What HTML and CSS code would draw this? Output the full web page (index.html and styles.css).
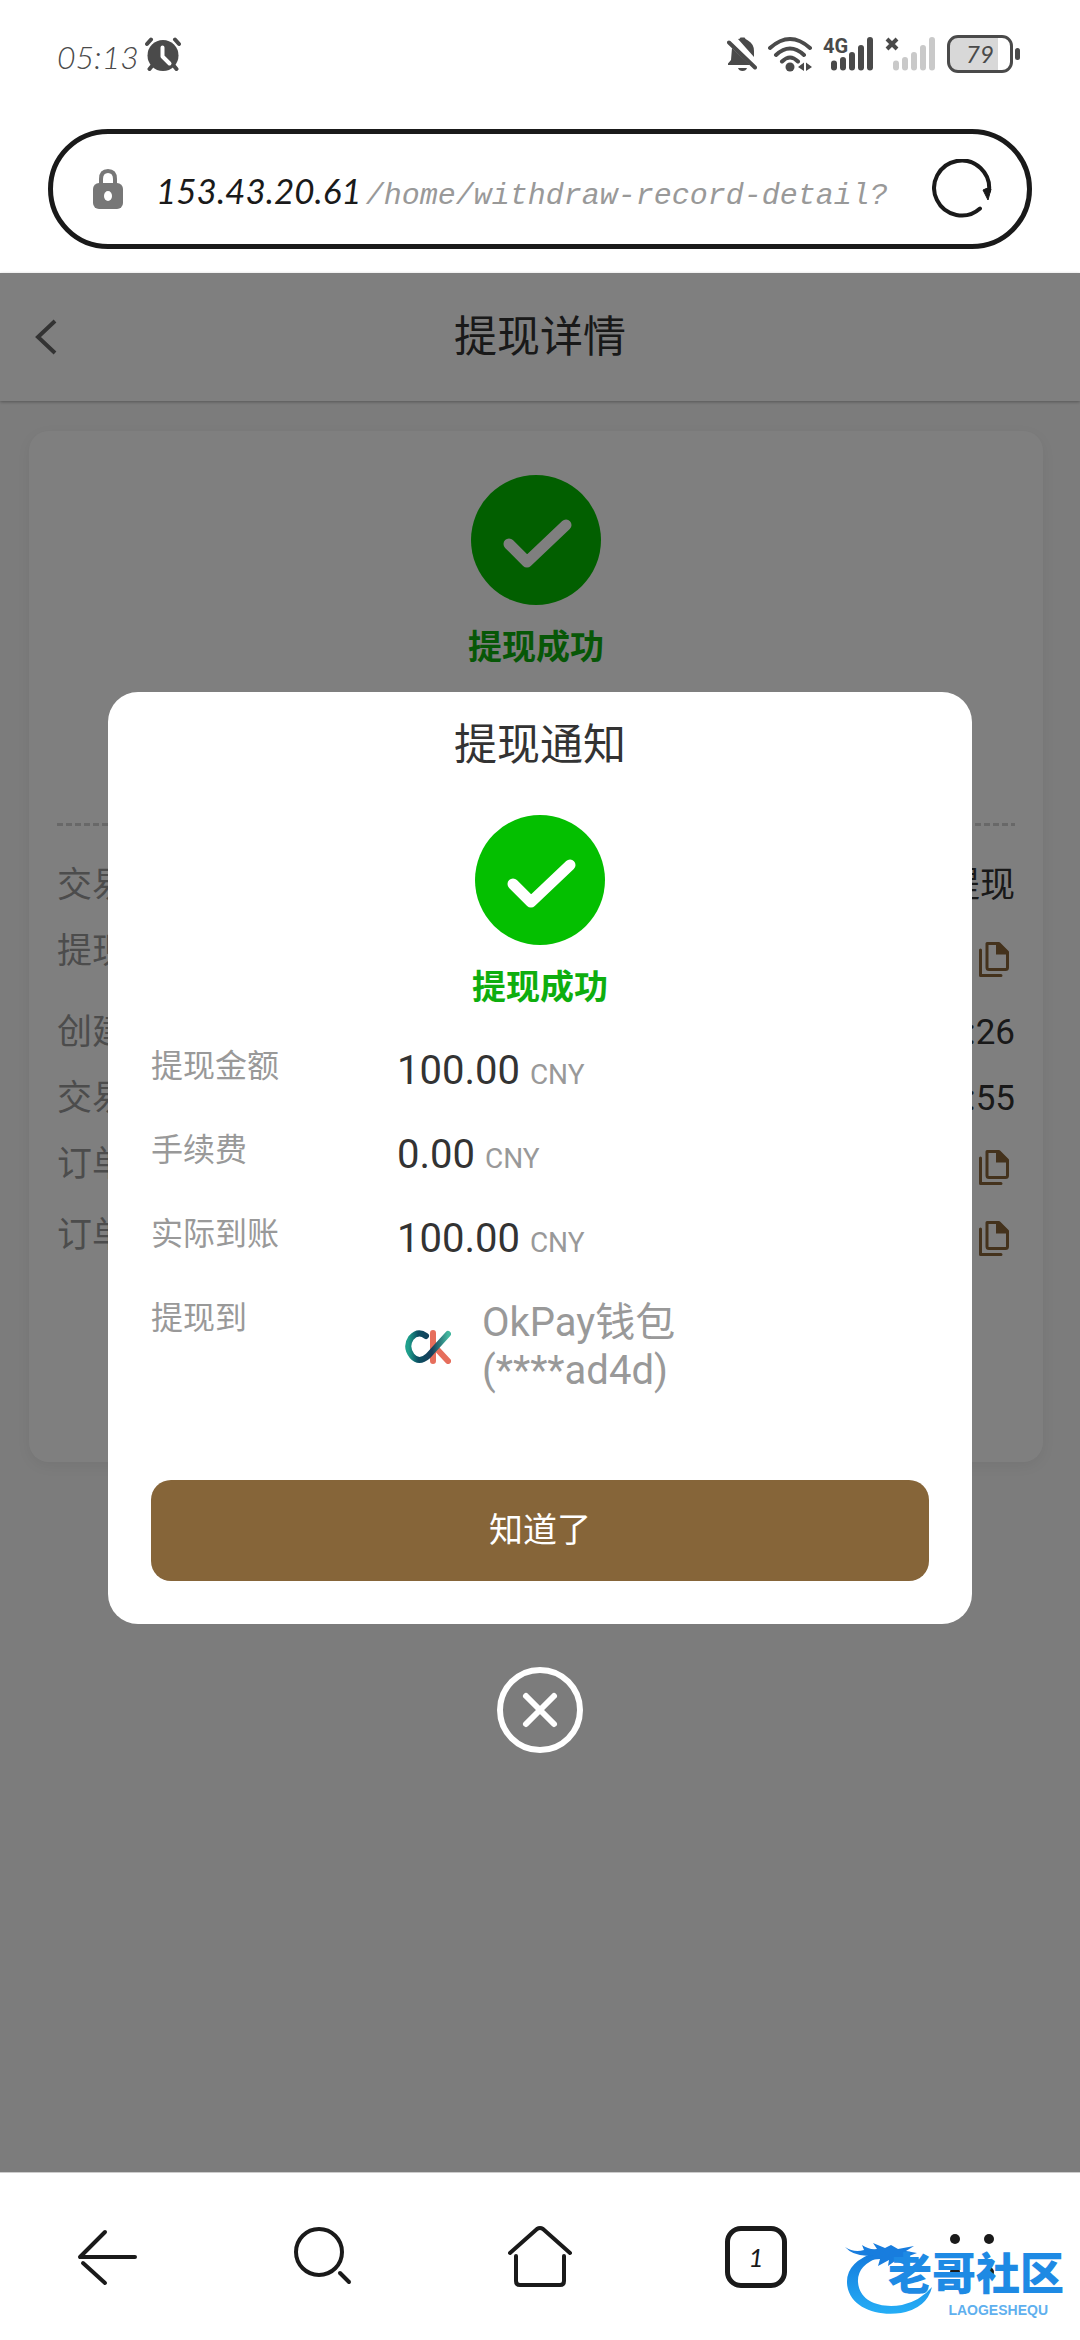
FILE: index.html
```html
<!DOCTYPE html>
<html lang="zh-CN">
<head>
<meta charset="utf-8">
<meta name="viewport" content="width=device-width, initial-scale=1">
<title>提现详情</title>
<link rel="stylesheet" href="styles.css">
</head>
<body>
<svg class="defs" aria-hidden="true">
  <symbol id="success" viewBox="0 0 130 130">
    <circle cx="65" cy="65" r="65" fill="#04bf00"/>
    <path d="M38 69 56 87 95 50" fill="none" stroke="#fff" stroke-width="11" stroke-linecap="round" stroke-linejoin="round"/>
  </symbol>
  <symbol id="copy" viewBox="0 0 30 35">
    <path d="M8 1.500H20L28.500 10V25.500Q28.500 27.500 26.500 27.500H10Q8 27.500 8 25.500Z" fill="none" stroke="#886439" stroke-width="3" stroke-linejoin="round"/>
    <path d="M17 2H20L29 11V12.500H17Z" fill="#886439"/>
    <path d="M1.500 8V33.500H22" fill="none" stroke="#886439" stroke-width="3" stroke-linecap="round" stroke-linejoin="round"/>
  </symbol>
</svg>
<div class="screen">
  <header class="status">
    <div class="status-side">
      <span class="clock">05:13</span>
      <svg class="alarm" width="36" height="34" viewBox="0 0 36 34">
        <circle cx="18" cy="18.500" r="15.500" fill="#4a4a4a"/>
        <path d="M2 7 6 2.500M34 7 30 2.500M7 29 4.500 32M29 29 31.500 32" stroke="#4a4a4a" stroke-width="4" stroke-linecap="round"/>
        <path d="M17.500 10.500V19.500L24.500 26.500" fill="none" stroke="#fff" stroke-width="4" stroke-linecap="round" stroke-linejoin="round"/>
      </svg>
    </div>
    <div class="status-side status-icons">
      <svg width="30" height="36" viewBox="0 0 30 36">
        <path d="M11 3Q13 3 13.500 1.500H17.500Q18 3 21 4.500 27 8 27 15V21ZM5 12 23 29H1V27.500L4 24Z" fill="#4a4a4a"/>
        <path d="M2 6.500 28 31.500" stroke="#4a4a4a" stroke-width="4" stroke-linecap="round"/>
        <path d="M11 32H20Q19 35 15.500 35 12 35 11 32Z" fill="#4a4a4a"/>
      </svg>
      <svg width="44" height="36" viewBox="0 0 44 36">
        <path d="M2 12Q22-6 42 12M8 19Q22 6 36 19M14 25.500Q22 17.500 30 25.500" fill="none" stroke="#4a4a4a" stroke-width="4" stroke-linecap="round"/>
        <circle cx="22" cy="31" r="4.500" fill="#4a4a4a"/>
        <path d="M30 31 36 26.500V35ZM38 26.500 44 31 38 35Z" fill="#4a4a4a"/>
      </svg>
      <span class="signal">
        <span class="net">4G</span>
        <svg width="44" height="36" viewBox="0 0 44 36"><path d="M4 27.500V31.500M13 24V31.500M22 19V31.500M31 12V31.500M40 4V31.500" stroke="#4a4a4a" stroke-width="6" stroke-linecap="round"/></svg>
      </span>
      <span class="signal">
        <svg class="nosim" width="14" height="16" viewBox="0 0 14 16"><path d="M2 3 12 13M12 3 2 13" stroke="#4a4a4a" stroke-width="4"/></svg>
        <svg width="44" height="36" viewBox="0 0 44 36"><path d="M4 27.500V31.500M13 24V31.500M22 19V31.500M31 12V31.500M40 4V31.500" stroke="#c9c9c9" stroke-width="6" stroke-linecap="round"/></svg>
      </span>
      <span class="battery"><span class="cell">79</span><span class="nub"></span></span>
    </div>
  </header>

  <div class="address-wrap">
    <div class="address">
      <svg class="lock" width="30" height="40" viewBox="0 0 30 40">
        <path d="M8 17V10Q8 2 15 2T22 10V17" fill="none" stroke="#777" stroke-width="4"/>
        <rect y="14" width="30" height="26" rx="6" fill="#777"/><ellipse cx="15" cy="27" rx="4" ry="5" fill="#fff"/>
      </svg>
      <button class="url" type="button"><span class="host">153.43.20.61</span><span class="path">/home/withdraw-record-detail?</span></button>
      <button class="reload" type="button" aria-label="刷新">
        <svg width="60" height="60" viewBox="0 0 60 60">
          <path d="M48 49.500A27.500 27.500 0 1 1 57 32" fill="none" stroke="#1a1a1a" stroke-width="4" stroke-linecap="round"/>
          <path d="M51 31Q55 28 59 30L56 41Z" fill="#1a1a1a" stroke="#1a1a1a" stroke-linejoin="round"/>
        </svg>
      </button>
    </div>
  </div>

  <main class="web">
    <div class="bar">
      <button class="back" type="button" aria-label="返回"><svg width="22" height="36" viewBox="0 0 22 36"><path d="M20 2 3 18 20 34" fill="none" stroke="#666" stroke-width="4"/></svg></button>
      <h1 class="title">提现详情</h1>
    </div>
    <section class="card">
      <svg class="badge" width="130" height="130"><use href="#success"/></svg>
      <p class="state">提现成功</p>
      <dl class="details">
        <div class="row"><dt>交易</dt><dd>提现</dd></div>
        <div class="row row-tall"><dt>提现</dt><dd><button class="copy" type="button" aria-label="复制"><svg width="30" height="35"><use href="#copy"/></svg></button></dd></div>
        <div class="row"><dt>创建</dt><dd>:26</dd></div>
        <div class="row"><dt>交易</dt><dd>:55</dd></div>
        <div class="row row-mid"><dt>订单</dt><dd><button class="copy" type="button" aria-label="复制"><svg width="30" height="35"><use href="#copy"/></svg></button></dd></div>
        <div class="row row-mid"><dt>订单</dt><dd><button class="copy" type="button" aria-label="复制"><svg width="30" height="35"><use href="#copy"/></svg></button></dd></div>
      </dl>
    </section>

    <div class="overlay">
      <div class="modal" role="dialog" aria-labelledby="notice">
        <h2 class="title" id="notice">提现通知</h2>
        <svg class="badge" width="130" height="130"><use href="#success"/></svg>
        <p class="state">提现成功</p>
        <dl class="summary">
          <dt>提现金额</dt><dd>100.00 <small>CNY</small></dd>
          <dt>手续费</dt><dd>0.00 <small>CNY</small></dd>
          <dt>实际到账</dt><dd>100.00 <small>CNY</small></dd>
          <dt>提现到</dt>
          <dd class="wallet">
            <svg width="46" height="34" viewBox="0 0 46 34">
              <defs><linearGradient id="teal" x1="0" y1="0" x2="1" y2="0"><stop offset="0" stop-color="#1fa08c"/><stop offset=".25" stop-color="#0b4f62"/><stop offset=".6" stop-color="#163e5a"/><stop offset="1" stop-color="#43b79f"/></linearGradient></defs>
              <path d="M28 3V31M30 17 43 31" stroke="#e66e5c" stroke-width="6" stroke-linecap="round"/>
              <path d="M21 6Q13 0 6 8 0 17 7 26 14 34 23 26L43 4" fill="none" stroke="url(#teal)" stroke-width="6" stroke-linecap="round" stroke-linejoin="round"/>
            </svg>
            <span>OkPay钱包<br>(****ad4d)</span>
          </dd>
        </dl>
        <button class="confirm" type="button">知道了</button>
      </div>
      <button class="close" type="button" aria-label="关闭"><svg width="86" height="86" viewBox="0 0 86 86"><circle cx="43" cy="43" r="40" fill="none" stroke="#fff" stroke-width="6"/><path d="M29 29 57 57M57 29 29 57" stroke="#fff" stroke-width="6" stroke-linecap="round"/></svg></button>
    </div>
  </main>

  <nav class="tools">
    <button type="button" aria-label="后退"><svg width="64" height="64" viewBox="0 0 64 64"><path d="M29 7 4 32H59M7 38 29 58" fill="none" stroke="#1a1a1a" stroke-width="4" stroke-linecap="round" stroke-linejoin="round"/></svg></button>
    <button type="button" aria-label="搜索"><svg width="64" height="64" viewBox="0 0 64 64"><circle cx="27" cy="27" r="23" fill="none" stroke="#1a1a1a" stroke-width="4"/><path d="M48 48 57 57" stroke="#1a1a1a" stroke-width="4" stroke-linecap="round"/></svg></button>
    <button type="button" aria-label="主页"><svg width="64" height="64" viewBox="0 0 64 64"><path d="M2 28 29 4Q32 2 35 4L62 28M8 31V56Q8 60 12 60H52Q56 60 56 56V31" fill="none" stroke="#1a1a1a" stroke-width="4" stroke-linecap="round" stroke-linejoin="round"/></svg></button>
    <button type="button"><span class="tabs">1</span></button>
    <button type="button" aria-label="菜单"><svg width="64" height="64" viewBox="0 0 64 64"><g fill="#1a1a1a"><circle cx="15" cy="14" r="5"/><circle cx="49" cy="14" r="5"/><circle cx="15" cy="47" r="5"/><circle cx="49" cy="47" r="5"/></g></svg></button>
    <div class="brand">
      <svg class="dragon" width="92" height="78" viewBox="0 0 92 78">
        <defs><linearGradient id="blue" x1="0" y1="0" x2="0" y2="1"><stop offset="0" stop-color="#1479dc"/><stop offset="1" stop-color="#25aef6"/></linearGradient></defs>
        <path d="M32 12Q2 22 3 43C4 66 31 77 57 73Q83 68 88 47 76 61 58 65C34 69 15 60 14 42Q13 25 36 17Z" fill="url(#blue)"/>
        <path d="M1 7Q10 13 20 10L18 5Q25 10 33 9L29 3 41 8 47 5 54 9 70 6 62 11 73 13 65 16 71 22 60 20 62 25 51 21 44 26 45 20 34 26 36 19 24 20 30 15Q11 18 1 7Z" fill="#187dde"/>
      </svg>
      <div class="brand-text"><span class="brand-name">老哥社区</span><span class="brand-sub">LAOGESHEQU</span></div>
    </div>
  </nav>
</div>
</body>
</html>
```
FILE: styles.css
```css
* { box-sizing: border-box; }
body { margin: 0; font-family: Roboto, "Noto Sans CJK SC", sans-serif; color: #333; background: #fff; }
h1, h2, p, dl, dd { margin: 0; }
button { padding: 0; border: 0; background: none; font: inherit; color: inherit; }
svg { display: block; flex: none; }
.defs { position: absolute; width: 0; height: 0; }
.screen { display: flex; flex-direction: column; min-height: 100vh; }

.status { display: flex; justify-content: space-between; height: 108px; padding: 0 60px 0 57px; color: #4a4a4a; }
.status-side { display: flex; align-items: center; gap: 6px; }
.clock { font: italic 300 32px/40px Lato, sans-serif; padding-top: 6px; }
.status-icons { gap: 11px; }
.signal { position: relative; display: flex; padding-left: 7px; }
.net { position: absolute; left: 0; top: 0; font: 700 20px/20px Roboto, sans-serif; }
.nosim { position: absolute; left: 0; top: 0; }
.battery { display: flex; align-items: center; gap: 2px; }
.cell { width: 66px; height: 38px; border: 3px solid #4a4a4a; border-radius: 11px; background: linear-gradient(90deg, #d8d8d8 80%, #fff 80%); font: italic 400 24px/32px Lato, sans-serif; text-align: center; }
.nub { width: 5px; height: 12px; border-radius: 3px; background: #4a4a4a; }

.address-wrap { padding: 21px 48px 24px; }
.address { display: flex; align-items: center; height: 120px; padding: 0 35px 0 40px; border: 5px solid #1a1a1a; border-radius: 60px; }
.url { flex: 1; min-width: 0; margin: 8px 36px 0 33px; display: flex; align-items: baseline; gap: 4px; overflow: hidden; white-space: nowrap; line-height: 48px; font-style: italic; }
.host { font-family: Lato, sans-serif; font-size: 35px; color: #1a1a1a; }
.path { font-family: "Liberation Mono", monospace; font-size: 30px; color: #999; }

.web { position: relative; flex: 1; background: #f8f8f8; }
.bar { display: grid; grid-template-columns: 1fr auto 1fr; align-items: center; height: 128px; padding: 0 35px; background: #fff; box-shadow: 0 1px 3px rgba(0, 0, 0, .3); }
.title { font-size: 43px; line-height: 64px; font-weight: 400; text-align: center; }
.card { height: 1031px; margin: 30px 37px 0 29px; padding: 44px 28px 0; border-radius: 20px; background: #fff; box-shadow: 0 4px 14px rgba(0, 0, 0, .06); }
.badge { margin: 0 auto; }
.state { margin-top: 18px; font-size: 34px; line-height: 48px; font-weight: 700; text-align: center; color: #0eae0e; }
.details { margin-top: 152px; padding-top: 30px; background: repeating-linear-gradient(90deg, #d0d0d0 0 6px, #fff 6px 9px) top / 100% 3px no-repeat; font-size: 35px; line-height: 66px; }
.row { display: flex; justify-content: space-between; height: 66px; }
.row-tall { height: 81px; }
.row-mid { height: 71px; }
.row dt { color: #999; }
.row dd { display: flex; align-items: center; }
.copy { padding-right: 6px; }

.overlay { position: absolute; inset: 0; display: flex; flex-direction: column; align-items: center; justify-content: center; gap: 43px; background: rgba(0, 0, 0, .5); }
.modal { width: 80%; padding: 21px 43px 43px; border-radius: 30px; background: #fff; }
.modal .badge { margin-top: 38px; }
.summary { display: grid; grid-template-columns: 246px 1fr; row-gap: 31px; margin-top: 31px; font-size: 40px; line-height: 48px; }
.summary dt { font-size: 32px; color: #999; }
.summary dd { padding-top: 5px; }
.summary small { font-size: 28px; line-height: 28px; color: #999; }
.wallet { display: flex; align-items: center; gap: 31px; padding-left: 8px; color: #999; }
.confirm { width: 100%; height: 101px; margin-top: 85px; padding-bottom: 6px; border-radius: 20px; background: #866539; color: #fff; font-size: 34px; }

.tools { position: relative; display: grid; grid-template-columns: repeat(5, 1fr); height: 168px; border-top: 1px solid #ccc; }
.tools button { display: flex; align-items: center; justify-content: center; }
.tabs { display: flex; align-items: center; justify-content: center; width: 62px; height: 62px; border: 5px solid #1a1a1a; border-radius: 16px; font: italic 400 26px/30px Lato, sans-serif; color: #1a1a1a; }
.brand { position: absolute; right: 16px; bottom: 22px; display: flex; align-items: flex-end; }
.dragon { margin-right: -48px; }
.brand-text { display: flex; flex-direction: column; align-items: flex-end; }
.brand-name { font-size: 44px; line-height: 54px; font-weight: 900; color: #1e8ae4; }
.brand-sub { padding-right: 16px; font: 700 14px/16px "Liberation Sans", sans-serif; color: #5fb0ee; }
```
